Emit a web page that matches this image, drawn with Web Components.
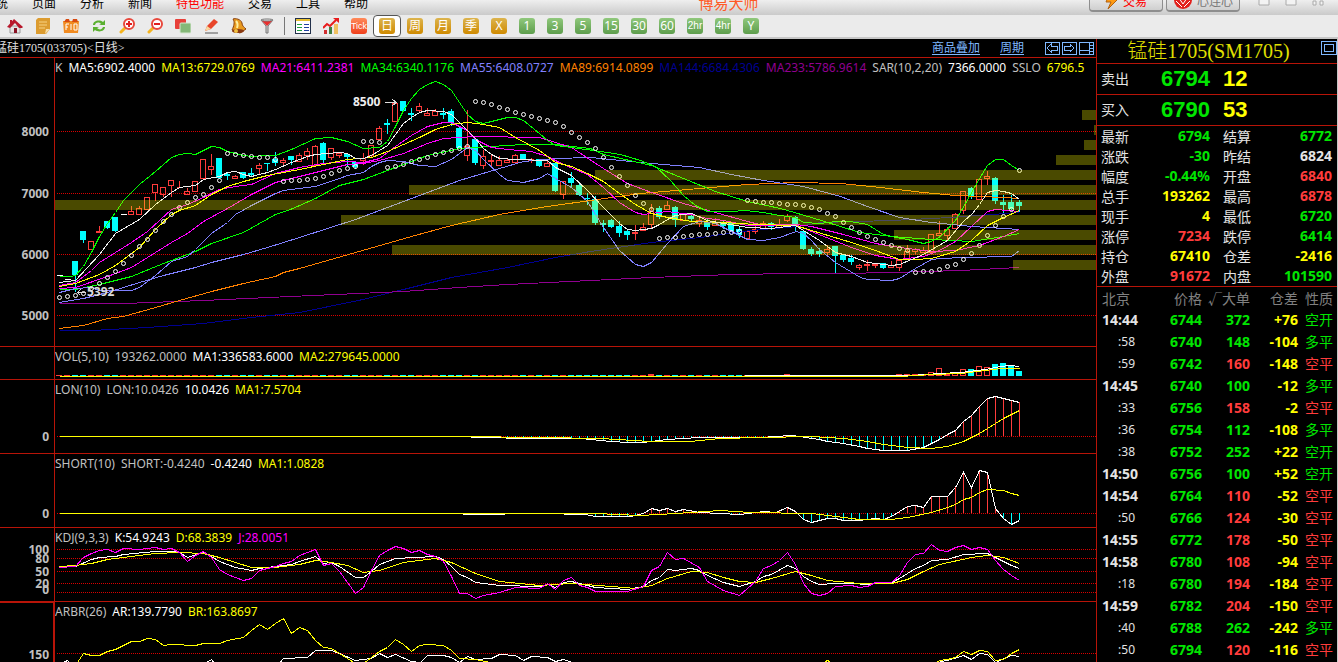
<!DOCTYPE html>
<html lang="zh-CN">
<head>
<meta charset="utf-8">
<title>博易大师</title>
<style>
html,body{margin:0;height:100%;background:#000;overflow:hidden}
body{font-family:"Noto Sans","Noto Sans CJK SC",sans-serif}
</style>
</head>
<body>
<trade-app></trade-app>
<script>
const define=(name,html,setup)=>{
  const t=document.createElement('template');
  t.innerHTML=html;
  customElements.define(name,class extends HTMLElement{
    connectedCallback(){
      if(this.shadowRoot)return;
      this.attachShadow({mode:'open'}).append(t.content.cloneNode(true));
      if(setup)setup(this,this.shadowRoot);
    }
  });
};

/* ---------- menu bar ---------- */
define('menu-bar',`<style>
:host{display:grid;grid-template-columns:auto 1fr auto;grid-template-rows:15px;align-items:end;height:15px;overflow:hidden;background:linear-gradient(#efefef,#cacaca)}
nav{display:flex;gap:24px;margin-left:-16px;padding-bottom:4px}
button{all:unset;font:12px/16px "Noto Sans CJK SC",sans-serif;color:#000;white-space:nowrap}
nav .hot{color:#f00}
.title{text-align:center;font:15px/16px "Noto Sans CJK SC",sans-serif;color:#ff5a26;padding-bottom:4px}
.side{display:flex;align-items:end;gap:3px;padding-bottom:3px}
.side .pill{box-sizing:border-box;width:74px;height:22px;border:1px solid #8e8e8e;border-bottom-width:2px;border-radius:4px;background:linear-gradient(#f8f8f8,#cfcfcf);display:flex;justify-content:center;align-items:center;gap:4px;color:#777}
.side .red{color:#f00}
.win{display:flex;gap:15px;padding:0 14px 6px 15px}
svg{display:block}
</style>
<nav><button>系统</button><button>页面</button><button>分析</button><button>新闻</button><button class="hot">特色功能</button><button>交易</button><button>工具</button><button>帮助</button></nav>
<div class="title">博易大师</div>
<div class="side">
<button class="pill red"><svg width="14" height="18" viewBox="0 0 14 18"><path d="M5 1h8l-3 6h3L3 17l3-7H1z" fill="#ff9a10" stroke="#b06010"/></svg>交易</button>
<button class="pill"><svg width="20" height="18" viewBox="0 0 20 18"><circle cx="10" cy="8" r="9" fill="#e2201c"/><path d="M3 9l6 6M17 9l-6 6M6 6l4 6 4-6" stroke="#fff" fill="none" stroke-width="1"/></svg>心连心</button>
<div class="win">
<svg width="12" height="8"><path d="M1 1h10v6H1z" fill="#f3f3f3" stroke="#aaa"/></svg>
<svg width="12" height="8"><path d="M1 1h10v6H1z" fill="#f3f3f3" stroke="#aaa"/></svg>
<svg width="12" height="8"><path d="M1 7V3h3v4zM8 7V3h3v4z" fill="#f3f3f3" stroke="#aaa"/></svg>
</div>
</div>`);

/* ---------- tool bar ---------- */
define('tool-button',`<style>
:host{display:block}
button{all:unset;box-sizing:border-box;display:grid;place-items:center;width:28px;height:22px}
:host([pressed]) button{border:1px solid #555;border-radius:4px;background:#fff}
.tile{display:flex;justify-content:center;align-items:center;width:16px;height:16px;border-radius:3px;color:#fff;font:12px/16px "Noto Sans","Noto Sans CJK SC",sans-serif}
.gold{background:linear-gradient(#dcb44e,#cf8a00)}
.green{background:linear-gradient(#90c87c,#5d9d4c)}
.tick{background:linear-gradient(#ff8a5a,#f0401c)}
.small{font:10px/16px "Liberation Sans Narrow","Liberation Sans",sans-serif}
.small.tick{font-size:9px}
</style><button><slot></slot></button>`,(el,root)=>{
  const tone=el.getAttribute('tone');
  if(!tone)return;
  const s=document.createElement('span');
  s.className='tile '+tone;
  s.textContent=el.getAttribute('label');
  if(s.textContent.length>2)s.classList.add('small');
  root.querySelector('slot').replaceWith(s);
});

define('tool-bar',`<style>
:host{display:flex;align-items:center;height:22px;padding-left:1px;background:#ebebeb;border-bottom:2px solid #c6c6c6}
hr{width:1px;height:18px;margin:0 4px 0 3px;border:0;background:#777}
svg{display:block}
</style>
<tool-button><svg width="16" height="16" viewBox="0 0 16 16"><path d="M3 8h10v7H3z" fill="#e6e4e4" stroke="#9a9a9a"/><path d="M0 9L7 1l9 8-1 1H12L8 5 3 10z" fill="#b8182c"/><path d="M3 2h2v3l-2 2z" fill="#b8182c"/><path d="M7 10h3v5H7z" fill="#8a1224"/></svg></tool-button>
<tool-button><svg width="16" height="16" viewBox="0 0 16 16"><path d="M3 0h12v11l-4 5H1V2z" fill="#dc9c30"/><path d="M10 16l1-5h4z" fill="#f8dfa8"/><path d="M4 4h8M4 7h8M4 10h6" stroke="#f7d283" fill="none"/></svg></tool-button>
<tool-button><svg width="16" height="16" viewBox="0 0 16 16"><path d="M0 3h16l-1 12H1z" fill="#f08a20"/><path d="M1 4l2-3h3l1 3M9 4l1-3h4l1 3" fill="#d84a10"/><path d="M3 12V6h3M3 9h2M8 12V6M11 6h3v6h-3z" stroke="#fff" stroke-width="1" fill="none"/></svg></tool-button>
<tool-button><svg width="14" height="14" viewBox="0 0 14 14"><path d="M1 6C1 2 7 0 11 3l2-2v5H7l2-1C7 3 4 3 3 6zM13 8c0 4-6 6-10 3l-2 2V8h6l-2 1c2 2 5 2 6-1z" fill="#5ab030"/></svg></tool-button>
<tool-button><svg width="16" height="16" viewBox="0 0 16 16"><path d="M2 14l4-4" stroke="#f5b41e" stroke-width="3" stroke-linecap="round"/><circle cx="10" cy="6" r="5" fill="#fff" stroke="#e8483c" stroke-width="2"/><path d="M7 6h6M10 3v6" stroke="#e02020" stroke-width="2"/></svg></tool-button>
<tool-button><svg width="16" height="16" viewBox="0 0 16 16"><path d="M2 14l4-4" stroke="#f5b41e" stroke-width="3" stroke-linecap="round"/><circle cx="10" cy="6" r="5" fill="#fff" stroke="#e8483c" stroke-width="2"/><path d="M7 6h6" stroke="#e02020" stroke-width="2"/></svg></tool-button>
<tool-button><svg width="16" height="16" viewBox="0 0 16 16"><rect width="11" height="10" rx="1" y="1" fill="#e8403a"/><rect x="5" y="5" width="11" height="10" rx="1" fill="#84b878" stroke="#d4e6cf"/></svg></tool-button>
<tool-button><svg width="16" height="16" viewBox="0 0 16 16"><path d="M2 15h13" stroke="#555"/><path d="M2 13l2-5 7-7 4 3-7 7z" fill="#e8452a"/><path d="M2 13l2-5 4 3z" fill="#f8d8a0"/></svg></tool-button>
<tool-button><svg width="16" height="16" viewBox="0 0 16 16"><path d="M2 1c2-1 8 0 9 4 0 3 2 4 4 6l-6 4-8-3c2-4 3-8 1-11z" fill="#e89a20" stroke="#8a4210"/><ellipse cx="7" cy="13" rx="6" ry="2" fill="#8a3a12"/><circle cx="5" cy="13" r="2" fill="#f0c040"/><path d="M5 3c2 2 2 4 1 7" stroke="#fff0a0" fill="none" stroke-width="2"/></svg></tool-button>
<tool-button><svg width="14" height="16" viewBox="0 0 14 16"><path d="M1 2l5 6v7h2V8l5-6z" fill="#d4d4d4" stroke="#777"/><path d="M2 3h10L7 8z" fill="#e83030"/><ellipse cx="7" cy="2" rx="6" ry="1" fill="#eee" stroke="#777"/></svg></tool-button>
<hr>
<tool-button><svg width="16" height="16" viewBox="0 0 16 16" shape-rendering="crispEdges"><path d="M0 0h16v16H0z" fill="#22304a"/><path d="M1 3h14v12H1z" fill="#fff"/><path d="M1 1h14v2H1z" fill="#e8c030"/><path d="M2 6h5M2 9h5M2 12h5" stroke="#20a040"/><path d="M9 6h5M9 9h5M9 12h5" stroke="#2040a0"/></svg></tool-button>
<tool-button><svg width="16" height="16" viewBox="0 0 16 16"><path d="M1 12h3v4H1z" fill="#d03030"/><path d="M6 9h3v7H6z" fill="#408040"/><path d="M11 6h4v10h-4z" fill="#f0c060"/><path d="M0 10l4-4 3 2 6-6" stroke="#e81c1c" stroke-width="2" fill="none"/><path d="M10 0h6v5z" fill="#e81c1c"/></svg></tool-button>
<tool-button tone="tick" label="Tick"></tool-button>
<tool-button tone="gold" label="日" pressed></tool-button>
<tool-button tone="gold" label="周"></tool-button>
<tool-button tone="gold" label="月"></tool-button>
<tool-button tone="gold" label="季"></tool-button>
<tool-button tone="gold" label="X"></tool-button>
<tool-button tone="green" label="1"></tool-button>
<tool-button tone="green" label="3"></tool-button>
<tool-button tone="green" label="5"></tool-button>
<tool-button tone="green" label="15"></tool-button>
<tool-button tone="green" label="30"></tool-button>
<tool-button tone="green" label="60"></tool-button>
<tool-button tone="green" label="2hr"></tool-button>
<tool-button tone="green" label="4hr"></tool-button>
<tool-button tone="green" label="Y"></tool-button>`);

/* ---------- chart header ---------- */
define('chart-header',`<style>
:host{display:flex;justify-content:space-between;align-items:center;height:18px;border-bottom:1px solid #b81408;overflow:hidden;font:12px/18px "Liberation Serif","Noto Sans CJK SC",serif;color:#e0e0e0;white-space:nowrap}
.name{margin-left:-5px}
.tools{display:flex;align-items:center;gap:20px;padding-right:2px}
a{color:#7fb8ff;text-underline-offset:2px}
.nav{display:flex;gap:1px}
button{all:unset;display:block}
svg{display:block;fill:none;stroke:#7fb8ff;shape-rendering:crispEdges}
</style>
<span class="name">锰硅1705(033705)&lt;日线&gt;</span>
<div class="tools"><a href="#overlay">商品叠加</a><a href="#period">周期</a>
<div class="nav">
<button aria-label="前一屏"><svg width="16" height="14" viewBox="0 0 16 14"><path d="M1 1h14v12H1zM3 7l4-4v2h6v4H7v2z"/></svg></button>
<button aria-label="后一屏"><svg width="16" height="14" viewBox="0 0 16 14"><path d="M1 1h14v12H1zM13 7L9 3v2H3v4h6v2z"/></svg></button>
<button aria-label="布局"><svg width="16" height="14" viewBox="0 0 16 14"><path d="M1 1h14v12H1zM11 1v12M1 9h10M12 4h3M12 7h3M12 10h3"/></svg></button>
</div></div>`);

/* ---------- chart data: x runs 8px per bar, y is the canvas row ---------- */
const W='#fff',Y='#ff0',M='#f0f',G='#0f0',B='#8080ff',O='#ff8000',N='#000090',P='#900090',GR='#c0c0c0';
const CANDLES=`w275,275 w279,279 c261,275,261,291 c231,240,231,242 r241,249,240,249 r231,232,225,232 c221,228 c217,231 w214,214 r211,214,205,214 r208,214,205,214 r197,209 r184,192,184,200 r187,194,187,196 r180,185,180,196 r187,187,180,187 r191,194,187,194 r181,191 r159,178 r166,169,153,174 c158,178 c174,176,171,179 r176,178,174,178 c172,178,171,178 c173,175,167,175 r165,168,162,173 c163,163,162,170 c159,163,151,165 r160,162,157,165 c156,160,156,164 r155,161,152,161 r151,155,147,159 r146,165,144,165 c143,160,141,162 r148,157,148,159 r153,155,153,157 c154,157,153,165 c162,167,160,168 r158,160,152,164 r145,155,145,157 r128,139,125,139 c123,125,118,133 r103,121,100,121 c101,111 c113,115,107,120 r106,110,102,112 r113,115,107,115 r111,115,108,115 c113,115,107,118 c111,123,108,125 c128,148,126,148 r146,155,109,160 c139,163,137,164 r156,165,149,168 r160,161,154,167 r160,165,155,165 r160,162,157,162 r155,162,153,162 c154,159 r159,160,157,162 c159,166,158,166 r163,166,160,166 c163,191 r181,194,181,198 c178,183,171,187 c185,195,182,195 c198,199,192,204 c199,223,195,224 c223,225,219,231 c220,227,218,227 c226,233,220,236 c231,235,228,239 r232,233,224,239 r227,230,222,230 r211,224,203,227 c208,217,205,218 r205,209,200,209 c207,220,205,226 r214,220 c216,219,214,221 r220,223,215,226 c222,227,218,229 r222,225,217,225 c223,226,219,228 c223,231 c229,235,225,237 r231,238 r229,231,225,233 r223,229,220,229 c223,227,221,229 r224,227,218,227 r216,220,213,221 c217,227,215,230 c231,249 c249,254,246,255 c251,254,247,256 r249,252,244,255 c246,256,245,273 c255,260,254,261 c258,262,254,264 r265,267,263,269 r264,265,259,270 r264,265,262,267 c263,268,262,268 r265,267,260,267 r260,267,260,270 r251,259,244,259 r249,251,247,253 r250,252,246,252 r234,252 r233,235,220,235 r229,235,226,239 r214,228,212,228 r191,210,191,213 c188,197,186,198 r179,199,177,199 r176,178,170,184 c178,201,176,203 c202,205,194,212 c202,209,194,209 c202,206,199,211`.split(' ').map(s=>{
  const v=s.slice(1).split(',').map(Number);
  return [s[0],v[0],v[1],v[2]??v[0],v[3]??v[1]];
});
const PRICE_LINES=[
[N,'59,330 91,330 147,327 203,323 251,317 299,312 358,300 403,289 451,277 507,267 555,257 590,251 651,242 700,237 750,230 798,226 820,222 891,220 950,217 1019,212'],
[P,'59,303 123,303 203,300 290,296 403,291 459,287 507,284 590,280 651,277 731,274 795,273 840,273 891,272 960,270 1019,267'],
[O,'59,328 83,325 107,318 123,316 155,307 179,300 211,291 243,283 275,276 283,272 299,268 355,252 411,236 451,225 499,214 547,206 590,200 640,193 699,188 747,184 795,182 840,183 880,187 923,192 955,195 1003,197 1019,198'],
[B,'59,302 83,298 107,292 139,282 163,275 195,267 211,262 243,254 267,247 299,237 355,219 403,201 459,180 499,168 523,161 555,158 590,157 651,163 699,167 731,174 763,180 803,186 840,196 867,206 899,217 931,222 971,226 1019,229'],
[G,'59,289 75,289 99,284 131,276 163,263 195,251 211,243 243,232 275,214 290,209 315,198 339,185 363,179 395,167 427,155 459,148 475,147 523,144 555,144 590,148 603,154 651,165 683,178 715,191 747,201 780,208 811,217 840,226 859,232 891,236 931,239 971,241 1003,236 1019,233'],
[M,'59,288 75,287 107,276 131,267 147,257 171,242 187,233 203,221 227,208 251,194 275,182 299,176 323,170 347,164 363,163 379,160 403,153 427,143 443,138 475,136 539,137 555,142 571,147 603,168 627,183 651,192 683,203 715,212 747,221 763,225 795,224 811,226 843,234 875,243 899,247 931,251 955,250 979,245 1003,236 1019,229'],
[M,'59,285 75,282 91,270 99,262 131,242 147,231 171,209 187,204 203,197 219,189 235,186 251,184 275,173 299,167 323,163 347,161 363,162 379,158 395,146 411,135 427,126 443,122 451,122 467,130 475,139 491,147 507,149 531,151 547,156 563,164 587,174 603,187 619,202 635,212 643,214 659,212 667,211 690,214 707,218 723,220 747,225 795,224 811,231 851,247 875,255 899,259 923,256 939,250 955,241 971,226 987,211 995,209 1019,211'],
[Y,'59,286 75,283 99,274 115,265 139,247 155,229 171,214 179,210 195,205 211,194 227,186 243,181 267,175 299,169 323,164 347,159 371,157 387,151 403,144 419,137 435,129 451,124 467,122 483,124 499,127 515,137 539,150 555,162 571,166 587,173 603,181 619,193 635,204 651,213 667,217 691,221 723,222 755,224 795,225 811,230 851,242 875,250 899,259 915,259 931,258 955,251 971,240 987,225 1003,217 1019,210'],
['#eee','59,282 75,280 99,254 115,233 139,219 155,204 171,192 179,187 195,185 203,179 219,176 227,172 235,171 243,174 251,176 267,172 275,169 291,162 307,156 315,154 339,152 347,153 355,158 363,158 371,155 387,145 395,134 403,123 411,117 419,112 427,110 443,111 451,114 459,122 467,130 475,138 483,148 491,154 499,158 515,159 547,160 555,167 571,175 587,190 603,207 619,223 627,229 635,230 651,228 659,224 669,218 675,215 691,213 707,220 723,223 747,227 771,228 795,225 803,230 819,240 835,252 851,256 867,262 891,265 899,264 923,254 947,240 957,228 963,221 972,213 979,204 987,192 995,190 1003,191 1011,193 1019,199'],
[B,'59,292 75,288 91,287 99,290 131,290 139,287 155,275 171,261 187,256 195,249 211,233 227,222 235,214 251,205 275,193 283,190 299,188 315,186 339,178 347,175 363,172 371,166 379,162 387,160 403,161 419,165 435,166 451,159 467,147 475,150 483,159 499,174 507,180 523,182 539,178 547,173 555,178 571,187 587,201 603,227 619,250 635,264 643,266 651,262 667,243 683,226 699,221 715,223 731,231 747,239 763,240 779,237 796,231 803,233 811,240 819,249 835,262 860,277 867,279 891,280 899,278 915,268 931,259 941,258 963,257 1011,256 1019,250'],
[G,'59,276 70,276 75,275 83,266 91,252 99,236 107,223 115,212 123,200 139,184 155,171 171,157 179,154 187,153 195,154 203,150 211,146 219,147 227,151 243,155 251,156 267,155 275,155 283,152 291,149 315,138 331,137 347,141 363,148 379,147 387,141 395,126 403,110 411,98 419,89 427,84 435,81 443,84 451,90 459,102 467,114 475,121 483,123 499,119 507,117 515,117 523,120 539,133 547,140 555,145 571,147 600,151 620,154 640,160 655,166 670,180 683,195 695,205 707,211 730,211 745,210 763,212 779,215 795,217 803,222 820,223 835,221 850,221 867,224 883,234 891,236 907,239 923,243 931,241 940,236 955,220 965,203 979,178 987,165 995,159 1003,159 1011,165 1019,170']];
const SAR=[297,296,295,293,288,283,277,271,263,255,246,239,230,221,214,207,202,197,194,187,180,153,154,155,156,157,157,159,181,180,180,179,178,176,173,170,168,166,141,141,142,167,166,164,161,159,157,154,152,150,148,146,101,102,104,107,109,112,114,116,118,120,122,126,132,137,142,148,157,167,176,185,195,203,209,238,237,237,236,235,234,234,233,232,232,231,200,201,202,202,203,204,204,205,207,209,213,216,222,227,232,236,239,242,245,248,250,272,271,271,269,266,264,259,253,245,235,225,216,209,170];
/* volume-at-price bars: top row and distance of the left end from the right edge */
const PROFILE=[[110,14],[125,2],[140,12],[155,40],[170,501],[185,687],[200,1041],[215,755],[230,202],[245,704],[260,83]];

const line=([c,p])=>`<polyline points="${p}" fill="none" stroke="${c}"/>`;
const at=(pts,x)=>{
  const a=pts.split(' ').map(s=>s.split(',').map(Number));
  for(let k=1;k<a.length;k++)if(x<=a[k][0]){
    const [x0,y0]=a[k-1],[x1,y1]=a[k];
    return Math.round(y0+(y1-y0)*(x-x0)/(x1-x0));
  }
  return a[a.length-1][1];
};
const stems=(pts,zero)=>CANDLES.map((_,i)=>{
  const x=59+8*i,y=at(pts,x);
  return Math.abs(y-zero)<1?'':`<rect x="${x}" y="${Math.min(y,zero)}" width="1" height="${Math.abs(y-zero)}" fill="${y>zero?'#0ff':'#ff3c3c'}"/>`;
}).join('');

/* outlines sit on pixel centres, filled bodies on pixel edges */
const centred=s=>`<g transform="translate(.5 .5)">${s}</g>`;
const drawCandles=()=>CANDLES.map(([t,a,b,h,l],i)=>{
  const x=59+8*i;
  if(t==='w')return centred(`<path d="M${x-3} ${a}h6" stroke="#fff"/>`);
  if(t==='c')return centred(`<path d="M${x} ${h}V${l}" stroke="#0ff"/>`)+`<rect x="${x-3}" y="${a}" width="6" height="${Math.max(1,b-a)}" fill="#0ff"/>`;
  return centred(`<path d="M${x} ${h}V${a}M${x} ${b}V${l}M${x-3} ${a}h5V${b}h-5z" fill="none" stroke="#ff3c3c"/>`);
}).join('');
const drawPrice=()=>drawCandles()+centred(PRICE_LINES.map(line).join('')
 +`<g shape-rendering="auto">${SAR.map((y,i)=>`<circle cx="${59+8*i}" cy="${y}" r="2" fill="none" stroke="#fff"/>`).join('')}</g>
 <path d="M384 102h12M392 99l4 3-4 3M77 292h8M80 289l-3 3 3 3" stroke="#ddd" fill="none"/>`)
 +`<text x="353" y="106" fill="#eee">8500</text><text x="87" y="296" fill="#ddd">5392</text>`;

const VOL={109:372,110:368,111:373,112:372,113:369,114:369,115:366,116:367,117:364,118:363,119:366,120:371};
const drawVol=()=>CANDLES.map(([t],i)=>{
  const x=56+8*i,y=VOL[i]||(i>104||i===74||i===91?374:375),cy=t==='c';
  return y<373&&!cy?centred(`<path d="M${x} ${y}h5V375h-5z" fill="none" stroke="#ff3c3c"/>`):`<path d="M${x} ${y}h6V376h-6z" fill="${cy?'#0ff':'#ff3c3c'}"/>`;
}).join('')+centred(line([W,'59,376 690,376 800,375 910,375 940,373 960,372 985,369 1000,366 1010,365 1019,366'])+line([Y,'59,376 900,376 931,374 960,373 985,370 1000,368 1019,368']));

const LON='59,436 460,436 480,437 530,438 580,438 611,441 627,442 643,442 659,440 667,439 699,437 760,437 790,435 800,436 811,438 819,439 827,441 843,443 859,446 867,448 883,450 907,450 923,447 931,443 939,439 947,434 955,430 963,421 971,415 979,406 987,398 995,396 1003,398 1019,402';
const SHORT='59,513 455,513 470,514 540,513 585,514 595,516 630,516 643,513 651,508 659,510 667,508 675,511 683,509 699,512 740,514 763,511 775,512 787,507 795,511 803,519 811,522 819,520 827,518 835,518 843,520 859,520 875,518 883,519 891,516 907,506 915,505 923,507 931,496 947,496 955,487 963,472 971,487 979,470 987,472 995,508 1003,518 1011,524 1019,520';

const PANELS={
price:{top:58,grid:[[131,8000],[193,7000],[254,6000],[315,5000]],
 info:[[GR,'K'],[W,'MA5:6902.4000'],[Y,'MA13:6729.0769'],[M,'MA21:6411.2381'],[G,'MA34:6340.1176'],[B,'MA55:6408.0727'],[O,'MA89:6914.0899'],[N,'MA144:6684.4306'],[P,'MA233:5786.9614'],[GR,'SAR(10,2,20)'],[W,'7366.0000'],[GR,'SSLO'],[Y,'6796.5']],
 draw:drawPrice,profile:true},
vol:{top:347,grid:[],info:[[GR,'VOL(5,10)'],[GR,'193262.0000'],[W,'MA1:336583.6000'],[Y,'MA2:279645.0000']],draw:drawVol},
lon:{top:380,grid:[[436,0]],info:[[GR,'LON(10)'],[GR,'LON:10.0426'],[W,'10.0426'],[Y,'MA1:7.5704']],
 draw:()=>stems(LON,436)+centred(line([W,LON])+line([Y,'59,436 460,436 540,437 600,438 650,441 690,441 720,438 760,437 811,436 843,438 867,441 883,444 907,447 931,448 947,446 963,441 979,433 995,423 1003,418 1019,410']))},
short:{top:454,grid:[[513,0]],info:[[GR,'SHORT(10)'],[GR,'SHORT:-0.4240'],[W,'-0.4240'],[Y,'MA1:1.0828']],
 draw:()=>stems(SHORT,513)+centred(line([W,SHORT])+line([Y,'59,513 595,513 640,515 675,513 720,510 750,512 811,513 835,516 859,519 891,519 907,517 931,512 947,507 955,504 963,499 971,497 979,492 987,489 1003,490 1011,493 1019,495']))},
kdj:{top:528,grid:[[549,100],[558,80],[571,50],[583,20],[592,0,589]],info:[[GR,'KDJ(9,3,3)'],[W,'K:54.9243'],[Y,'D:68.3839'],[M,'J:28.0051']],
 draw:()=>centred([[W,'59,566 75,566 91,559 99,557 115,556 123,554 155,551 171,551 179,552 187,557 203,552 211,556 219,561 235,567 251,570 259,568 275,566 291,564 299,561 315,556 323,563 331,562 339,566 355,577 363,577 371,571 379,564 395,558 435,556 443,559 451,566 459,574 467,577 475,582 499,585 539,586 547,584 555,587 563,582 571,581 595,587 627,589 643,586 651,580 659,577 667,569 675,570 691,568 699,570 707,575 723,582 739,586 755,581 763,576 771,574 787,565 795,568 803,576 811,581 819,584 835,583 851,583 867,584 891,582 899,578 907,573 915,568 923,565 931,560 947,559 963,554 987,553 995,557 1003,561 1011,565 1019,568'],
 [Y,'59,566 75,565 91,563 107,559 131,556 155,553 179,552 203,553 219,557 235,562 251,567 275,567 299,564 315,560 331,562 347,565 363,572 379,570 403,562 435,558 451,562 475,573 499,581 539,585 571,583 611,586 635,588 651,585 667,578 691,571 707,572 723,577 739,581 755,582 771,578 795,571 811,575 827,580 859,583 891,583 907,579 923,571 939,564 971,557 987,555 1003,557 1019,563'],
 [M,'59,567 75,566 83,557 91,553 99,550 107,549 115,552 123,548 139,549 155,547 163,549 171,548 179,552 187,561 195,555 203,551 211,557 219,569 227,574 243,580 251,578 259,570 267,568 275,566 283,563 291,561 299,555 315,549 323,565 331,563 339,571 347,582 355,593 363,587 371,570 379,555 387,550 395,546 403,548 411,552 419,550 427,554 435,556 443,561 451,576 459,593 467,593 475,598 483,595 499,592 515,587 539,588 547,583 555,589 563,580 571,577 579,585 587,587 595,591 627,591 643,586 651,570 659,566 667,552 675,559 683,558 699,567 707,581 723,590 739,595 755,581 763,568 771,565 779,560 787,552 795,564 803,583 811,593 819,595 827,593 835,586 851,585 859,587 867,586 875,582 891,582 899,575 907,562 915,554 923,553 931,544 939,550 947,551 955,547 963,545 971,549 979,547 987,549 995,560 1003,569 1011,575 1019,580']].map(line).join(''))},
arbr:{top:602,grid:[[653,150]],info:[[GR,'ARBR(26)'],[W,'AR:139.7790'],[Y,'BR:163.8697']],
 draw:()=>centred([[W,'59,664 67,660 72,666 200,666 211,659 216,666 278,664 283,658 307,657 315,650 331,650 339,653 355,660 371,658 379,653 387,657 395,654 411,661 420,662 427,655 443,655 451,657 459,662 467,656 475,659 491,658 499,654 515,655 523,660 531,656 547,657 555,661 563,659 577,664 930,668 940,661 947,660 963,655 971,659 979,653 987,654 995,662 1011,655 1019,656'],
 [Y,'59,676 75,665 83,653 91,655 99,655 107,651 115,649 131,641 139,641 147,638 155,639 163,645 171,644 195,645 203,643 219,643 227,640 243,637 251,630 259,624 267,629 275,623 283,618 291,633 299,627 307,630 315,640 323,647 331,648 339,653 355,663 363,663 379,651 387,647 395,639 403,644 411,651 419,645 427,644 443,645 451,650 459,658 475,659 500,664 816,666 827,660 838,666 930,666 939,660 947,659 955,657 963,651 971,654 979,650 987,651 995,660 1003,659 1011,653 1019,649']].map(line).join(''))}
};

define('chart-panel',`<style>
:host{display:grid;grid-template-columns:55px 1fr;border-bottom:1px solid #b81408;min-height:0;overflow:hidden;font:12px/20px "Noto Sans",sans-serif}
:host([active]){border-bottom:0}
.axis{border-right:1px solid #b81408;overflow:hidden}
:host([active]) .axis{border-right-width:2px;border-top:1px solid #b81408}
.plot{display:grid;min-width:0;overflow:hidden}
.plot>*{grid-area:1/1}
.info{display:flex;gap:6px;white-space:nowrap;align-self:start}
svg{display:block;width:100%;height:100%;shape-rendering:crispEdges}
text{font:bold 12px "Noto Sans",sans-serif}
.axis text{fill:#c0c0c0;text-anchor:end}
</style>
<div class="axis"></div><div class="plot"><div class="info"></div></div>`,(el,root)=>{
  const p=PANELS[el.getAttribute('kind')];
  root.querySelector('.info').innerHTML=p.info.map(([c,t])=>`<span style="color:${c}">${t}</span>`).join('');
  root.querySelector('.axis').innerHTML=`<svg>${p.grid.map(([y,t,ty=y])=>`<text x="49" y="${ty-p.top+5}">${t}</text>`).join('')}</svg>`;
  root.querySelector('.plot').insertAdjacentHTML('beforeend',`<svg>
   <defs><pattern id="dots" width="2" height="1" patternUnits="userSpaceOnUse"><rect width="1" height="1" fill="#d80000"/></pattern></defs>
   ${p.grid.map(([y])=>`<rect x="1" width="100%" y="${y-p.top}" height="1" fill="url(#dots)"/>`).join('')}
   <g transform="translate(-55 ${-p.top})">${p.draw()}</g>
   ${p.profile?`<svg x="100%" overflow="visible">${PROFILE.map(([y,w])=>`<rect x="${-w}" y="${y-p.top}" width="${w}" height="10" fill="#ff0" opacity=".29"/>`).join('')}</svg>`:''}
  </svg>`);
});

/* ---------- quote column ---------- */
define('quote-summary',`<style>
:host{display:block;font:14px/20px "Noto Sans","Noto Sans CJK SC",sans-serif;color:#e4e4e4}
header{display:flex;height:24px;border-bottom:1px solid #b81408}
h1{flex:1;margin:0;text-align:center;font:20px/24px "Liberation Serif","Noto Sans CJK SC",serif;font-weight:300;color:#e0e000;white-space:nowrap}
button{all:unset;align-self:flex-start}
svg{display:block;fill:none;stroke:#7fb8ff;shape-rendering:crispEdges}
.deal{display:grid;grid-template-columns:44px 65px 1fr;height:30px;line-height:30px;padding-left:4px;border-bottom:1px solid #b81408}
.deal b{font:bold 22px/30px "Liberation Sans",sans-serif;text-align:right;color:#00e600}
.deal b+b{text-align:left;padding-left:13px;color:#ff0}
table{width:100%;table-layout:fixed;border-collapse:collapse;border-bottom:1px solid #b81408}
th{padding:0 0 0 4px;text-align:left;font-weight:400;font-family:"Noto Sans CJK SC",sans-serif}
th+td+th{padding-left:13px}
td{padding:0;text-align:right;font-weight:700}
td:last-child{padding-right:5px}
th,td{height:20px;line-height:20px}
.g{color:#00e600}.r{color:#ff3c3c}.y{color:#ff0}
</style>
<header><h1>锰硅1705(SM1705)</h1><button aria-label="最大化"><svg width="17" height="16" viewBox="0 0 17 16"><path d="M1 2h15v13H1zM4 5h9v7H4z"/></svg></button></header>
<div class="deal"><span>卖出</span><b>6794</b><b>12</b></div>
<div class="deal"><span>买入</span><b>6790</b><b>53</b></div>
<table><colgroup><col style="width:48px"><col style="width:65px"><col style="width:50px"><col></colgroup><tbody></tbody></table>`,(el,root)=>{
  root.querySelector('tbody').innerHTML=[
   ['最新','6794','g','结算','6772','g'],['涨跌','-30','g','昨结','6824',''],['幅度','-0.44%','g','开盘','6840','r'],
   ['总手','193262','y','最高','6878','r'],['现手','4','y','最低','6720','g'],['涨停','7234','r','跌停','6414','g'],
   ['持仓','67410','y','仓差','-2416','y'],['外盘','91672','r','内盘','101590','g']
  ].map(r=>`<tr><th>${r[0]}</th><td class="${r[2]}">${r[1]}</td><th>${r[3]}</th><td class="${r[5]}">${r[4]}</td></tr>`).join('');
});

define('tick-list',`<style>
:host{display:block;font:14px/22px "Noto Sans","Noto Sans CJK SC",sans-serif;color:#e4e4e4}
table{width:100%;table-layout:fixed;border-collapse:collapse}
th,td{height:22px;line-height:22px;padding:0;text-align:right;white-space:nowrap}
th{font-weight:400;color:#808080;font-family:"Noto Sans CJK SC",sans-serif}
td{font-weight:700}
th:first-child,td:first-child{text-align:left;padding-left:5px}
td.sec{text-align:right!important;font-weight:400;font-size:12px;padding-right:4px}
th:last-child,td:last-child{text-align:left;padding-left:7px;font-weight:400}
.g{color:#00e600}.r{color:#ff3c3c}.y{color:#ff0}
</style>
<table><colgroup><col style="width:42px"><col style="width:63px"><col style="width:48px"><col style="width:48px"><col></colgroup>
<thead><tr><th>北京</th><th>价格</th><th>√大单</th><th>仓差</th><th>性质</th></tr></thead><tbody></tbody></table>`,(el,root)=>{
  root.querySelector('tbody').innerHTML=`14:44 6744 372 +76 空开 g|:58 6740 148 -104 多平 g|:59 6742 160 -148 空平 r|14:45 6740 100 -12 多平 g|:33 6756 158 -2 空平 r|:36 6754 112 -108 多平 g|:38 6752 252 +22 空开 g|14:50 6756 100 +52 空开 g|14:54 6764 110 -52 空平 r|:50 6766 124 -30 空平 r|14:55 6772 178 -50 空平 r|14:58 6780 108 -94 空平 r|:18 6780 194 -184 空平 r|14:59 6782 204 -150 空平 r|:40 6788 262 -242 多平 g|:50 6794 120 -116 空平 r`.split('|').map(s=>{
    const [t,p,v,d,n,c]=s.split(' ');
    return `<tr><td class="${t[0]===':'?'sec':''}">${t}</td><td class="g">${p}</td><td class="${c}">${v}</td><td class="y">${d}</td><td class="${c}">${n}</td></tr>`;
  }).join('');
});

define('trade-app',`<style>
:host{display:grid;grid-template-rows:auto auto 1fr;height:100vh;background:#000}
main{display:grid;grid-template-columns:1fr 242px;min-height:0}
.charts{display:grid;grid-template-rows:19px 289px 33px 74px 74px 74px 1fr;min-width:0;min-height:0}
aside{box-sizing:border-box;border-left:1px solid #b81408;border-right:1px solid #c6c6c6;overflow:hidden;min-height:0}
</style>
<menu-bar></menu-bar>
<tool-bar></tool-bar>
<main>
<section class="charts">
<chart-header></chart-header>
<chart-panel kind="price"></chart-panel>
<chart-panel kind="vol"></chart-panel>
<chart-panel kind="lon"></chart-panel>
<chart-panel kind="short"></chart-panel>
<chart-panel kind="kdj"></chart-panel>
<chart-panel kind="arbr" active></chart-panel>
</section>
<aside><quote-summary></quote-summary><tick-list></tick-list></aside>
</main>`);
</script>
</body>
</html>
